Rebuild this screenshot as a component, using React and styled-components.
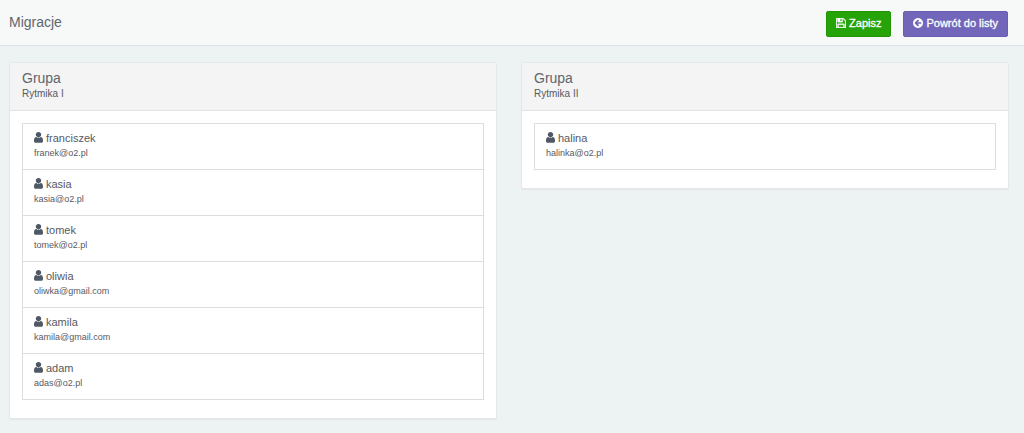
import React from 'react';
import styled, { createGlobalStyle } from 'styled-components';

const GlobalStyle = createGlobalStyle`
  * {
    box-sizing: border-box;
  }

  body {
    margin: 0;
    background: #edf2f3;
    color: #58595f;
    font-family: Arial, "Liberation Sans", sans-serif;
    font-size: 11px;
  }
`;

const Header = styled.header`
  display: flex;
  align-items: center;
  justify-content: space-between;
  min-height: 46px;
  padding: 2px 16px 0 9px;
  background: #f6f9f8;
  border-bottom: 1px solid #dfe4e6;
`;

const PageTitle = styled.h1`
  margin: 0 0 4px;
  font-size: 14px;
  font-weight: normal;
  line-height: 18px;
  color: #62656c;
`;

const Actions = styled.div`
  display: flex;
  gap: 12px;
`;

const Button = styled.button`
  display: flex;
  align-items: center;
  gap: 3px;
  height: 26px;
  padding: 0 9px 2px;
  border: 1px solid ${props => props.$border};
  border-radius: 2px;
  background: ${props => props.$color};
  color: #fff;
  font-family: inherit;
  font-size: 11px;
  -webkit-text-stroke: 0.3px #fff;
  cursor: pointer;
`;

const Groups = styled.main`
  display: grid;
  grid-template-columns: 1fr 1fr;
  align-items: start;
  gap: 24px;
  padding: 16px 15px 12px 9px;
`;

const Panel = styled.section`
  background: #fff;
  border: 1px solid #e4e8ea;
  border-radius: 2px;
  box-shadow: 0 1px 1px rgba(0, 0, 0, 0.05);
`;

const PanelHeading = styled.header`
  padding: 6px 12px 9px;
  background: #f4f4f4;
  border-bottom: 1px solid #e1e4e5;
`;

const PanelTitle = styled.h2`
  margin: 0;
  font-size: 14px;
  font-weight: normal;
  line-height: 18px;
  color: #62656c;
`;

const PanelSubtitle = styled.div`
  font-size: 10px;
  line-height: 14px;
`;

const MemberList = styled.ul`
  margin: 12px 12px 18px;
  padding: 0;
  list-style: none;
  border: 1px solid #dddddd;
`;

const Member = styled.li`
  padding: 7px 11px 8px;

  & + & {
    border-top: 1px solid #dddddd;
  }
`;

const MemberName = styled.div`
  display: flex;
  align-items: center;
  gap: 3px;
  line-height: 15px;
`;

const MemberEmail = styled.div`
  font-size: 9px;
  line-height: 15px;
`;

const SaveIcon = () => (
  <svg width="10" height="10" viewBox="128 128 1536 1536" fill="currentColor" stroke="currentColor" strokeWidth="60" aria-hidden="true">
    <path d="M512 1536h768v-384h-768v384zm896 0h128v-896q0-14-10-38.5t-20-34.5l-281-281q-10-10-34-20t-39-10v416q0 40-28 68t-68 28h-576q-40 0-68-28t-28-68v-416h-128v1280h128v-416q0-40 28-68t68-28h832q40 0 68 28t28 68v416zm-384-928v-320q0-13-9.5-22.5t-22.5-9.5h-192q-13 0-22.5 9.5t-9.5 22.5v320q0 13 9.5 22.5t22.5 9.5h192q13 0 22.5-9.5t9.5-22.5zm640 32v928q0 40-28 68t-68 28h-1344q-40 0-68-28t-28-68v-1344q0-40 28-68t68-28h928q40 0 88 20t76 48l280 280q28 28 48 76t20 88z" />
  </svg>
);

const BackIcon = () => (
  <svg width="10" height="10" viewBox="128 128 1536 1536" fill="currentColor" aria-hidden="true">
    <path d="M1408 960v-128q0-26-19-45t-45-19h-502l189-189q19-19 19-45t-19-45l-91-91q-18-18-45-18t-45 18l-362 362-91 91q-18 18-18 45t18 45l91 91 362 362q18 18 45 18t45-18l91-91q18-18 18-45t-18-45l-189-189h502q26 0 45-19t19-45zm256-64q0 209-103 385.5t-279.5 279.5-385.5 103-385.5-103-279.5-279.5-103-385.5 103-385.5 279.5-279.5 385.5-103 385.5 103 279.5 279.5 103 385.5z" />
  </svg>
);

const UserIcon = () => (
  <svg width="9" height="13" viewBox="256 128 1280 1849" fill="#4f5966" aria-hidden="true">
    <path d="M1536 1399q0 109-62.5 187t-150.5 78h-854q-88 0-150.5-78t-62.5-187q0-85 8.5-160.5t31.5-152 58.5-131 94-89 134.5-34.5q131 128 313 128t313-128q76 0 134.5 34.5t94 89 58.5 131 31.5 152 8.5 160.5zm-256-887q0 159-112.5 271.5t-271.5 112.5-271.5-112.5-112.5-271.5 112.5-271.5 271.5-112.5 271.5 112.5 112.5 271.5z" />
  </svg>
);

const groups = [
  {
    name: 'Rytmika I',
    members: [
      { name: 'franciszek', email: 'franek@o2.pl' },
      { name: 'kasia', email: 'kasia@o2.pl' },
      { name: 'tomek', email: 'tomek@o2.pl' },
      { name: 'oliwia', email: 'oliwka@gmail.com' },
      { name: 'kamila', email: 'kamila@gmail.com' },
      { name: 'adam', email: 'adas@o2.pl' },
    ],
  },
  {
    name: 'Rytmika II',
    members: [{ name: 'halina', email: 'halinka@o2.pl' }],
  },
];

const Group = ({ group }) => (
  <Panel>
    <PanelHeading>
      <PanelTitle>Grupa</PanelTitle>
      <PanelSubtitle>{group.name}</PanelSubtitle>
    </PanelHeading>
    <MemberList>
      {group.members.map(member => (
        <Member key={member.email}>
          <MemberName>
            <UserIcon />
            {member.name}
          </MemberName>
          <MemberEmail>{member.email}</MemberEmail>
        </Member>
      ))}
    </MemberList>
  </Panel>
);

const App = () => {
  return (
    <>
      <GlobalStyle />
      <Header>
        <PageTitle>Migracje</PageTitle>
        <Actions>
          <Button type="button" $color="#27a30a" $border="#229406">
            <SaveIcon />
            Zapisz
          </Button>
          <Button type="button" $color="#7266ba" $border="#6a5eb2">
            <BackIcon />
            Powrót do listy
          </Button>
        </Actions>
      </Header>
      <Groups>
        {groups.map(group => (
          <Group key={group.name} group={group} />
        ))}
      </Groups>
    </>
  );
};

export default App;
